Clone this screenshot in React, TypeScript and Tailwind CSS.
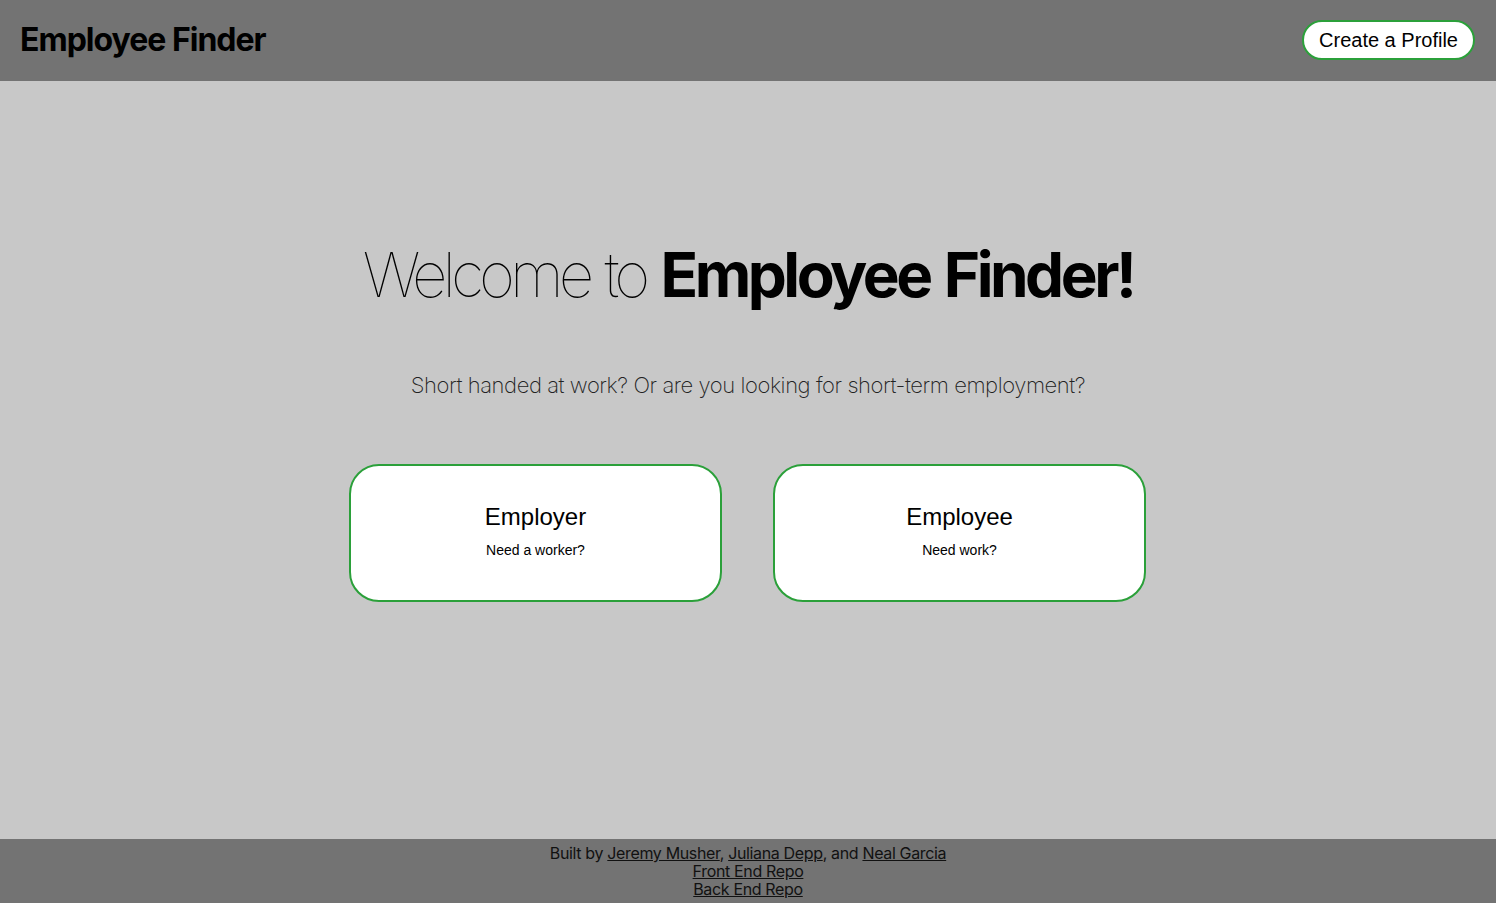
const inter = { fontFamily: 'Inter, "Noto Sans", sans-serif' }

function ChoiceCard({ title, note }: { title: string; note: string }) {
    return (
        <button className='w-[373px] h-[138px] bg-white border-2 border-[#2ba03a] rounded-[30px] flex flex-col items-center justify-center gap-[11px] pb-[6px] font-["Liberation_Sans",Arial,sans-serif] text-black'>
            <span className='text-[24px] leading-[28px]'>{title}</span>
            <span className='text-[14px] leading-[16px]'>{note}</span>
        </button>
    )
}

export default function App() {
    return (
        <div className='min-h-screen flex flex-col bg-[#c8c8c8]' style={inter}>
            <header className='h-[81px] bg-[#737373] flex items-center justify-between pl-5 pr-[21px]'>
                <h1 className='text-[32px] font-bold tracking-[-1px] text-black pb-[1px]'>Employee Finder</h1>
                <button className='h-[40px] px-[15px] bg-white border-2 border-[#2ba03a] rounded-full text-[20px] text-black font-["Liberation_Sans",Arial,sans-serif] mb-[2px]'>
                    Create a Profile
                </button>
            </header>

            <main className='flex-1 flex flex-col items-center pt-[156px]'>
                <h2 className='text-[62px] leading-[76px] text-black [word-spacing:3px]'>
                    <span className='font-thin tracking-[-5px]'>Welcome to </span>
                    <span className='font-bold tracking-[-3.5px]'>Employee Finder!</span>
                </h2>
                <p className='mt-[59px] text-[22px] leading-[26px] font-extralight text-[#222] tracking-[-0.43px]'>
                    Short handed at work? Or are you looking for short-term employment?
                </p>
                <div className='mt-[66px] flex gap-[51px] -ml-[1px]'>
                    <ChoiceCard title='Employer' note='Need a worker?' />
                    <ChoiceCard title='Employee' note='Need work?' />
                </div>
            </main>

            <footer className='bg-[#737373] py-[5px] flex flex-col items-center text-[16px] leading-[18px] tracking-[-0.35px] text-[#111]'>
                <p>
                    Built by <a href='#' className='underline'>Jeremy Musher</a>, <a href='#' className='underline'>Juliana Depp</a>, and <a href='#' className='underline'>Neal Garcia</a>
                </p>
                <a href='#' className='underline'>Front End Repo</a>
                <a href='#' className='underline'>Back End Repo</a>
            </footer>
        </div>
    )
}
